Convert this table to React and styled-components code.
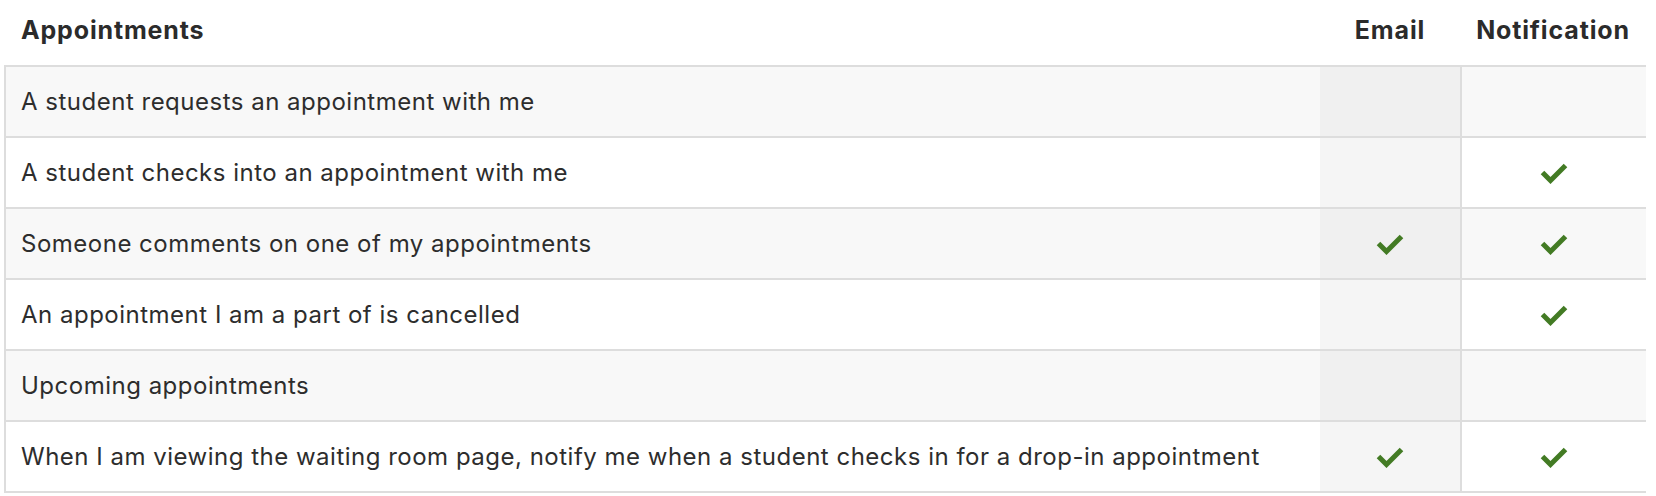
import React from 'react';
import styled, { createGlobalStyle } from 'styled-components';

const GlobalStyle = createGlobalStyle`
  body {
    margin: 0;
    background: #ffffff;
    font-family: Inter, "Noto Sans", sans-serif;
    color: #2d2d2d;
  }
`;

const Wrapper = styled.div`
  padding: 0 10px 0 4px;
`;

const Table = styled.table`
  width: 1642px;
  table-layout: fixed;
  border-collapse: separate;
  border-spacing: 0;
`;

const HeadCell = styled.th`
  height: 65px;
  padding: 0 15px 5px 17px;
  box-sizing: border-box;
  font-size: 25px;
  font-weight: 700;
  letter-spacing: 0.85px;
  color: #2b2b2b;
  text-align: ${(p) => (p.$center ? 'center' : 'left')};
  vertical-align: middle;
  ${(p) => p.$center && 'padding: 0 0 5px;'}
`;

const Row = styled.tr`
  background: ${(p) => (p.$striped ? '#f8f8f8' : '#ffffff')};
`;

const LabelCell = styled.td`
  height: 69px;
  padding: 0 15px;
  font-size: 24px;
  letter-spacing: 0.5px;
  color: #2d2d2d;
  border-top: 2px solid #dddddd;
  border-left: 2px solid #dddddd;
  ${(p) => p.$last && 'border-bottom: 2px solid #dddddd;'}
  vertical-align: middle;
  white-space: nowrap;
`;

const CheckCell = styled.td`
  padding: 0;
  text-align: center;
  vertical-align: middle;
  border-top: 2px solid #dddddd;
  ${(p) => p.$last && 'border-bottom: 2px solid #dddddd;'}
  ${(p) => p.$divider && 'border-left: 2px solid #dddddd;'}
  background: ${(p) => (p.$shaded ? (p.$striped ? '#f0f0f0' : '#f5f5f5') : 'transparent')};
`;

const CheckIcon = () => (
  <svg width="28" height="22" viewBox="0 0 28 22" style={{ display: 'block', margin: '0 auto' }}>
    <polyline
      points="2.5,10.5 10.5,18.5 25.5,3.5"
      fill="none"
      stroke="#437b24"
      strokeWidth="5"
      strokeLinejoin="miter"
    />
  </svg>
);

const rows = [
  { label: 'A student requests an appointment with me', email: false, notify: false },
  { label: 'A student checks into an appointment with me', email: false, notify: true },
  { label: 'Someone comments on one of my appointments', email: true, notify: true },
  { label: 'An appointment I am a part of is cancelled', email: false, notify: true },
  { label: 'Upcoming appointments', email: false, notify: false },
  {
    label:
      'When I am viewing the waiting room page, notify me when a student checks in for a drop-in appointment',
    email: true,
    notify: true,
  },
];

const App = () => (
  <Wrapper>
    <GlobalStyle />
    <Table>
      <colgroup>
        <col style={{ width: 1316 }} />
        <col style={{ width: 140 }} />
        <col style={{ width: 186 }} />
      </colgroup>
      <thead>
        <tr>
          <HeadCell>Appointments</HeadCell>
          <HeadCell $center>Email</HeadCell>
          <HeadCell $center>Notification</HeadCell>
        </tr>
      </thead>
      <tbody>
        {rows.map((r, i) => {
          const striped = i % 2 === 0;
          const last = i === rows.length - 1;
          return (
            <Row key={r.label} $striped={striped}>
              <LabelCell $last={last}>{r.label}</LabelCell>
              <CheckCell $shaded $striped={striped} $last={last}>
                {r.email && <CheckIcon />}
              </CheckCell>
              <CheckCell $divider $last={last}>
                {r.notify && <CheckIcon />}
              </CheckCell>
            </Row>
          );
        })}
      </tbody>
    </Table>
  </Wrapper>
);

export default App;
